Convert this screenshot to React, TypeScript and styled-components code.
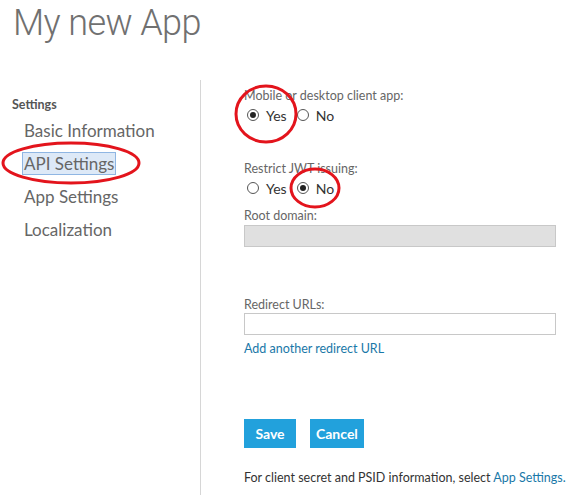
import React from "react";
import styled, { createGlobalStyle } from "styled-components";

const Global = createGlobalStyle`
  html, body { margin: 0; padding: 0; background: #fff; }
  body { font-family: Lato, "Open Sans", sans-serif; color: #555; }
`;

const Page = styled.div`
  position: relative;
  width: 576px;
  height: 495px;
  overflow: hidden;
`;

const Title = styled.h1`
  margin: 0;
  padding: 0 0 0 13px;
  height: 80px;
  font-family: Roboto, Lato, sans-serif;
  font-weight: 300;
  font-size: 36px;
  line-height: 46px;
  letter-spacing: -0.6px;
  color: #707070;
`;

const Body = styled.div`
  display: flex;
  height: 415px;
`;

const Sidebar = styled.nav`
  flex: 0 0 201px;
  border-right: 1px solid #d6d6d6;
  padding: 16px 0 0 12px;
  box-sizing: border-box;
`;

const SideHeading = styled.div`
  font-size: 12.5px;
  font-weight: 700;
  color: #555;
  line-height: 18px;
  margin-bottom: 7px;
`;

const NavItem = styled.div<{ $active?: boolean }>`
  margin-left: 11px;
  font-size: 17px;
  line-height: 20px;
  height: 33px;
  color: #666;
  span {
    padding: 0 1px;
    ${(p) =>
      p.$active
        ? "background: #dde9f7; outline: 1px solid #8fb6e3;"
        : ""}
  }
`;

const Content = styled.div`
  flex: 1;
  min-width: 0;
  padding: 8px 0 0 43px;
  font-size: 12.5px;
`;

const Label = styled.div`
  color: #666;
  font-size: 12.5px;
  line-height: 16px;
`;

const RadioRow = styled.div<{ $gap: number }>`
  display: flex;
  align-items: center;
  gap: 7px;
  height: 22px;
  margin-bottom: ${(p) => p.$gap}px;
`;

const RadioLabel = styled.label`
  display: flex;
  align-items: center;
  font-size: 14px;
  color: #333;
`;

const Circle = styled.span<{ $on?: boolean }>`
  width: 12px;
  height: 12px;
  border: 1px solid #555;
  border-radius: 50%;
  box-sizing: border-box;
  margin: 0 7px 0 3px;
  display: inline-flex;
  align-items: center;
  justify-content: center;
  &::after {
    content: "";
    width: 6px;
    height: 6px;
    border-radius: 50%;
    background: ${(p) => (p.$on ? "#222" : "transparent")};
  }
`;

const Input = styled.div<{ $disabled?: boolean; $top: number }>`
  width: 312px;
  height: 22px;
  box-sizing: border-box;
  border: 1px solid #c8c8c8;
  background: ${(p) => (p.$disabled ? "#e0e0e0" : "#fff")};
  margin-top: ${(p) => p.$top}px;
`;

const Spacer = styled.div<{ $h: number }>`
  height: ${(p) => p.$h}px;
`;

const Link = styled.a`
  color: #1a78a8;
  text-decoration: none;
  font-size: 12.5px;
`;

const LinkLine = styled.div`
  margin-top: 6px;
  line-height: 16px;
`;

const Buttons = styled.div`
  display: flex;
  gap: 14px;
  margin-top: 62px;
`;

const Button = styled.button`
  height: 29px;
  min-width: 52px;
  padding: 0 6px;
  border: none;
  background: #22a1dc;
  color: #fff;
  font-family: Lato, sans-serif;
  font-weight: 700;
  font-size: 14px;
`;

const Footer = styled.div`
  margin-top: 22px;
  font-size: 12.5px;
  color: #333;
  line-height: 16px;
  white-space: nowrap;
`;

const Marks = styled.svg`
  position: absolute;
  left: 0;
  top: 0;
  pointer-events: none;
`;

export default function App() {
  return (
    <Page>
      <Global />
      <Title>My new App</Title>
      <Body>
        <Sidebar>
          <SideHeading>Settings</SideHeading>
          <NavItem><span>Basic Information</span></NavItem>
          <NavItem $active><span>API Settings</span></NavItem>
          <NavItem><span>App Settings</span></NavItem>
          <NavItem><span>Localization</span></NavItem>
        </Sidebar>
        <Content>
          <Label>Mobile or desktop client app:</Label>
          <RadioRow $gap={35}>
            <RadioLabel><Circle $on />Yes</RadioLabel>
            <RadioLabel><Circle />No</RadioLabel>
          </RadioRow>
          <Label>Restrict JWT issuing:</Label>
          <RadioRow $gap={9}>
            <RadioLabel><Circle />Yes</RadioLabel>
            <RadioLabel><Circle $on />No</RadioLabel>
          </RadioRow>
          <Label>Root domain:</Label>
          <Input $disabled $top={1} />
          <Spacer $h={50} />
          <Label>Redirect URLs:</Label>
          <Input $top={0} />
          <LinkLine><Link href="#">Add another redirect URL</Link></LinkLine>
          <Buttons>
            <Button>Save</Button>
            <Button>Cancel</Button>
          </Buttons>
          <Footer>
            For client secret and PSID information, select <Link href="#">App Settings.</Link>
          </Footer>
        </Content>
      </Body>
      <Marks width="576" height="495" viewBox="0 0 576 495">
        <g fill="none" stroke="#e3141c" strokeWidth="3">
          <ellipse cx="71" cy="163" rx="68" ry="20" />
          <ellipse cx="266" cy="114" rx="30" ry="28" />
          <ellipse cx="315" cy="188" rx="24" ry="19" />
        </g>
      </Marks>
    </Page>
  );
}
